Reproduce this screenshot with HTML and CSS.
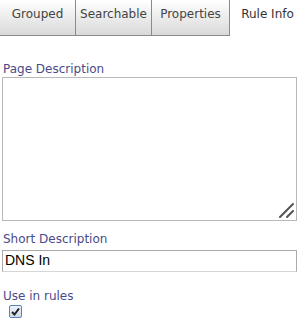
FILE: index.html
```html
<!DOCTYPE html>
<html>
<head>
<meta charset="utf-8">
<link rel="stylesheet" href="styles.css">
</head>
<body>
<div class="tabs">
  <div class="tab">Grouped</div>
  <div class="tab">Searchable</div>
  <div class="tab">Properties</div>
  <div class="tab active">Rule Info</div>
</div>
<div class="form">
  <div class="field first">
    <div class="label">Page Description</div>
    <div class="textarea">
      <svg class="grip" width="16" height="16" viewBox="0 0 16 16">
        <path d="M2 15 L15 2" stroke="#555" stroke-width="2" stroke-linecap="round"/>
        <path d="M9 15 L15 9" stroke="#555" stroke-width="2" stroke-linecap="round"/>
      </svg>
    </div>
  </div>
  <div class="field second">
    <div class="label">Short Description</div>
    <div class="input">DNS In</div>
  </div>
  <div class="field third">
    <div class="label">Use in rules</div>
    <span class="checkbox">
      <svg width="9" height="9" viewBox="0 0 9 9"><path d="M1 5 L3.5 7.5 L8 1.5" fill="none" stroke="#222" stroke-width="2"/></svg>
    </span>
  </div>
</div>
</body>
</html>
```
FILE: styles.css
```css
html, body {
  margin: 0;
  padding: 0;
  background: #fff;
}
body {
  font-family: "DejaVu Sans", Verdana, sans-serif;
  font-size: 12px;
  width: 305px;
  height: 328px;
  overflow: hidden;
}
.tabs {
  display: flex;
  height: 36px;
}
.tab {
  box-sizing: border-box;
  height: 36px;
  display: flex;
  align-items: center;
  justify-content: center;
  padding-bottom: 8px;
  color: #444;
  background: linear-gradient(#ffffff, #d9d9d9);
  border-right: 1px solid #8a8a8a;
  border-bottom: 1px solid #8a8a8a;
}
.tab:nth-child(1) { width: 76px; }
.tab:nth-child(2) { width: 76px; }
.tab:nth-child(3) { width: 78px; }
.tab.active {
  flex: 1;
  background: #fff;
  border: none;
  color: #333;
}
.form {
  padding: 0 8px 0 2px;
}
.field.first {
  margin-top: 26px;
}
.field.second {
  margin-top: 11px;
}
.field.third {
  margin-top: 17px;
}
.label {
  color: #4a4a8a;
  font-size: 12px;
  line-height: 15px;
  padding-left: 1px;
}
.field.second .label {
  margin-bottom: 3px;
}
.textarea {
  position: relative;
  box-sizing: border-box;
  height: 144px;
  border: 1px solid #b8b8b8;
  background: #fff;
}
.grip {
  position: absolute;
  right: 2px;
  bottom: 2px;
}
.input {
  box-sizing: border-box;
  height: 22px;
  border: 1px solid #aaa;
  border-bottom-color: #d6d6d6;
  font-family: "Liberation Sans", Arial, sans-serif;
  font-size: 14px;
  line-height: 19px;
  padding-left: 2px;
  color: #000;
}
.checkbox {
  display: flex;
  align-items: center;
  justify-content: center;
  box-sizing: border-box;
  width: 13px;
  height: 13px;
  margin: 1px 0 0 7px;
  border: 1px solid #5b7fbf;
  border-radius: 2px;
  background: linear-gradient(#eef2f8, #d2dae6);
}
```
